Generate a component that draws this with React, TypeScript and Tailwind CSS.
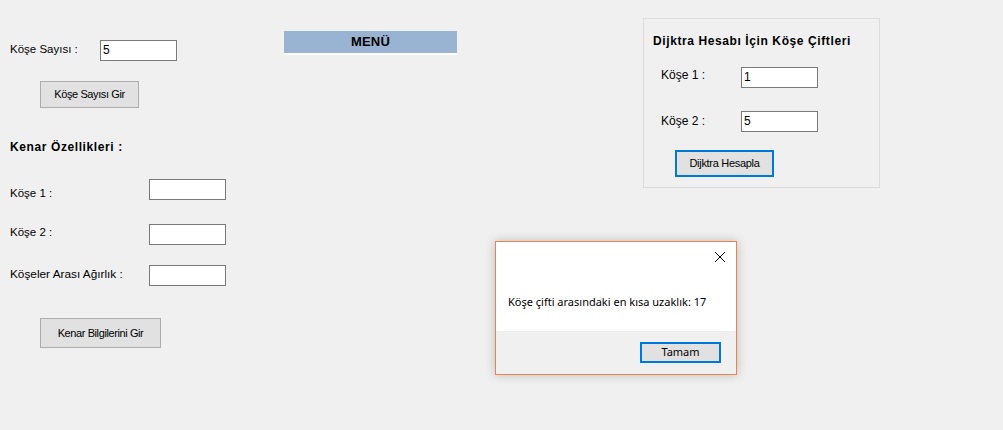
import React from "react";

const font = { fontFamily: '"Liberation Sans", Arial, sans-serif' };

function Field({ value = "", className = "" }: { value?: string; className?: string }) {
  return (
    <div
      className={`w-[77px] h-[21px] border border-[#7a7a7a] bg-white text-[12px] leading-[19px] pl-[2px] text-black shrink-0 ${className}`}
    >
      {value}
    </div>
  );
}

function WinButton({ label, className = "" }: { label: string; className?: string }) {
  return (
    <div
      className={`flex items-center justify-center bg-[#e1e1e1] border border-[#adadad] text-[11px] tracking-[-0.4px] text-black ${className}`}
    >
      {label}
    </div>
  );
}

export default function App() {
  return (
    <div
      className="relative w-[1003px] h-[430px] bg-[#f0f0f0] text-black overflow-hidden flex items-start"
      style={font}
    >
      {/* Left column */}
      <div className="w-[284px] shrink-0 flex flex-col items-start">
        <div className="mt-[40px] flex items-start h-[21px]">
          <span className="pl-[10px] w-[100px] text-[11.5px] leading-[14px] mt-[2px]">Köşe Sayısı :</span>
          <Field value="5" />
        </div>
        <WinButton label="Köşe Sayısı Gir" className="mt-[20px] ml-[40px] w-[99px] h-[27px]" />
        <div className="mt-[32px] pl-[10px] text-[12px] leading-[14px] font-bold tracking-[0.6px] h-[14px]">Kenar Özellikleri :</div>
        <div className="mt-[25px] flex items-start h-[21px]">
          <span className="pl-[10px] w-[149px] text-[11.5px] leading-[14px] mt-[7px]">Köşe 1 :</span>
          <Field />
        </div>
        <div className="mt-[24px] flex items-start h-[21px]">
          <span className="pl-[10px] w-[149px] text-[11.5px] leading-[14px] mt-[1px]">Köşe 2 :</span>
          <Field />
        </div>
        <div className="mt-[20px] flex items-start h-[21px]">
          <span className="pl-[10px] w-[149px] text-[11.8px] leading-[14px] mt-[2px]">Köşeler Arası Ağırlık :</span>
          <Field />
        </div>
        <WinButton label="Kenar Bilgilerini Gir" className="mt-[32px] ml-[40px] w-[121px] h-[30px]" />
      </div>

      {/* Menu bar */}
      <div className="mt-[31px] w-[173px] shrink-0 flex flex-col">
        <div className="h-[22px] bg-[#98b4d2] flex items-center justify-center text-[13px] font-bold tracking-[0.2px]">MENÜ</div>
        <div className="h-[2px] bg-white" />
      </div>

      {/* Group box */}
      <div className="ml-[186px] mt-[18px] w-[237px] h-[170px] border border-[#dcdcdc] shrink-0 flex flex-col items-start">
        <div className="mt-[15px] pl-[9px] text-[12px] leading-[14px] font-bold tracking-[0.6px]">Dijktra Hesabı İçin Köşe Çiftleri</div>
        <div className="mt-[19px] flex items-start h-[21px]">
          <span className="pl-[17px] w-[97px] text-[12px] leading-[14px] mt-[1px]">Köşe 1 :</span>
          <Field value="1" />
        </div>
        <div className="mt-[23px] flex items-start h-[21px]">
          <span className="pl-[17px] w-[97px] text-[12px] leading-[14px] mt-[3px]">Köşe 2 :</span>
          <Field value="5" />
        </div>
        <div className="mt-[18px] ml-[31px] w-[99px] h-[27px] flex items-center justify-center bg-[#e1e1e1] border-2 border-[#0078d7] text-[11px] tracking-[-0.3px]">
          Dijktra Hesapla
        </div>
      </div>

      {/* Message box */}
      <div
        className="absolute left-[495px] top-[241px] w-[242px] h-[134px] border border-[#e8834e] bg-white flex flex-col shadow-[0_0_10px_rgba(0,0,0,0.22)]"
        style={{ fontFamily: '"Noto Sans", "Open Sans", sans-serif' }}
      >
        <div className="h-[89px] relative flex flex-col">
          <div className="flex justify-end pr-[10px] pt-[9px]">
            <svg width="12" height="12" viewBox="0 0 12 12">
              <path d="M1 1 L11 11 M11 1 L1 11" stroke="#000" strokeWidth="1" fill="none" />
            </svg>
          </div>
          <div className="mt-[31px] pl-[12px] text-[11px] leading-[15px]">Köşe çifti arasındaki en kısa uzaklık: 17</div>
        </div>
        <div className="flex-1 bg-[#f0f0f0] flex justify-end items-start pr-[15px] pt-[11px]">
          <div className="w-[81px] h-[21px] bg-[#e1e1e1] border-2 border-[#0078d7] flex items-center justify-center text-[11px]">
            Tamam
          </div>
        </div>
      </div>
    </div>
  );
}
